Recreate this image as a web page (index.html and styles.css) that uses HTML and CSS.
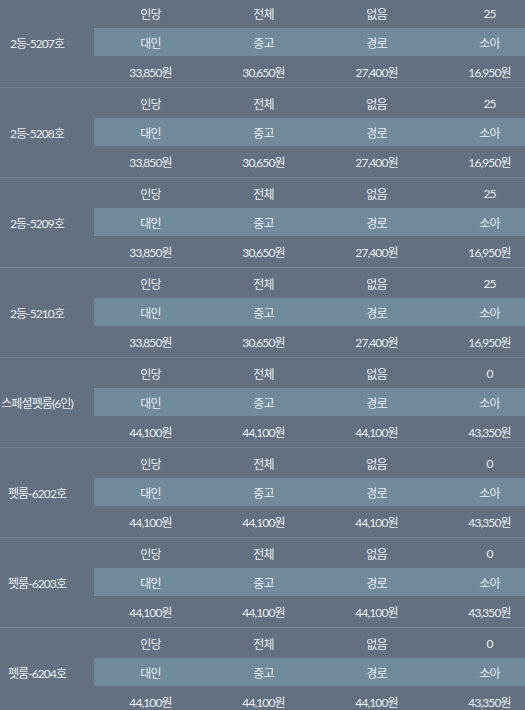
FILE: index.html
```html
<!DOCTYPE html>
<html lang="ko">
<head>
<meta charset="utf-8">
<title>요금표</title>
<link rel="stylesheet" href="styles.css">
</head>
<body>
<div class="table">
  <div class="block">
    <div class="label">2등-5207호</div>
    <div class="rows">
      <div class="row"><span>인당</span><span>전체</span><span>없음</span><span>25</span></div>
      <div class="row hl"><span>대인</span><span>중고</span><span>경로</span><span>소아</span></div>
      <div class="row last"><span>33,850원</span><span>30,650원</span><span>27,400원</span><span>16,950원</span></div>
    </div>
  </div>
  <div class="block">
    <div class="label">2등-5208호</div>
    <div class="rows">
      <div class="row"><span>인당</span><span>전체</span><span>없음</span><span>25</span></div>
      <div class="row hl"><span>대인</span><span>중고</span><span>경로</span><span>소아</span></div>
      <div class="row last"><span>33,850원</span><span>30,650원</span><span>27,400원</span><span>16,950원</span></div>
    </div>
  </div>
  <div class="block">
    <div class="label">2등-5209호</div>
    <div class="rows">
      <div class="row"><span>인당</span><span>전체</span><span>없음</span><span>25</span></div>
      <div class="row hl"><span>대인</span><span>중고</span><span>경로</span><span>소아</span></div>
      <div class="row last"><span>33,850원</span><span>30,650원</span><span>27,400원</span><span>16,950원</span></div>
    </div>
  </div>
  <div class="block">
    <div class="label">2등-5210호</div>
    <div class="rows">
      <div class="row"><span>인당</span><span>전체</span><span>없음</span><span>25</span></div>
      <div class="row hl"><span>대인</span><span>중고</span><span>경로</span><span>소아</span></div>
      <div class="row last"><span>33,850원</span><span>30,650원</span><span>27,400원</span><span>16,950원</span></div>
    </div>
  </div>
  <div class="block">
    <div class="label">스페셜펫룸(6인)</div>
    <div class="rows">
      <div class="row"><span>인당</span><span>전체</span><span>없음</span><span>0</span></div>
      <div class="row hl"><span>대인</span><span>중고</span><span>경로</span><span>소아</span></div>
      <div class="row last"><span>44,100원</span><span>44,100원</span><span>44,100원</span><span>43,350원</span></div>
    </div>
  </div>
  <div class="block">
    <div class="label">펫룸-6202호</div>
    <div class="rows">
      <div class="row"><span>인당</span><span>전체</span><span>없음</span><span>0</span></div>
      <div class="row hl"><span>대인</span><span>중고</span><span>경로</span><span>소아</span></div>
      <div class="row last"><span>44,100원</span><span>44,100원</span><span>44,100원</span><span>43,350원</span></div>
    </div>
  </div>
  <div class="block">
    <div class="label">펫룸-6203호</div>
    <div class="rows">
      <div class="row"><span>인당</span><span>전체</span><span>없음</span><span>0</span></div>
      <div class="row hl"><span>대인</span><span>중고</span><span>경로</span><span>소아</span></div>
      <div class="row last"><span>44,100원</span><span>44,100원</span><span>44,100원</span><span>43,350원</span></div>
    </div>
  </div>
  <div class="block">
    <div class="label">펫룸-6204호</div>
    <div class="rows">
      <div class="row"><span>인당</span><span>전체</span><span>없음</span><span>0</span></div>
      <div class="row hl"><span>대인</span><span>중고</span><span>경로</span><span>소아</span></div>
      <div class="row last"><span>44,100원</span><span>44,100원</span><span>44,100원</span><span>43,350원</span></div>
    </div>
  </div>
</div>
</body>
</html>
```
FILE: styles.css
```css
html, body {
  margin: 0;
  padding: 0;
  background: #647080;
  overflow: hidden;
}
body {
  width: 525px;
  height: 710px;
  font-family: Lato, "Noto Sans CJK KR", sans-serif;
  font-size: 12px;
  letter-spacing: -0.9px;
  color: #e8edf1;
}
.table {
  margin-top: -2px;
  width: 546px;
}
.block {
  display: flex;
  align-items: center;
  border-bottom: 1px solid #76828f;
}
.label {
  width: 74px;
  margin-right: 20px;
  flex: none;
  text-align: center;
  white-space: nowrap;
}
.rows {
  flex: none;
  width: 452px;
  display: flex;
  flex-direction: column;
}
.row {
  display: grid;
  grid-template-columns: repeat(4, 113px);
  height: 30px;
  align-items: center;
  text-align: center;
}
.row.hl {
  height: 28px;
  background: #708a9b;
}
.row.last {
  height: 31px;
}
```
